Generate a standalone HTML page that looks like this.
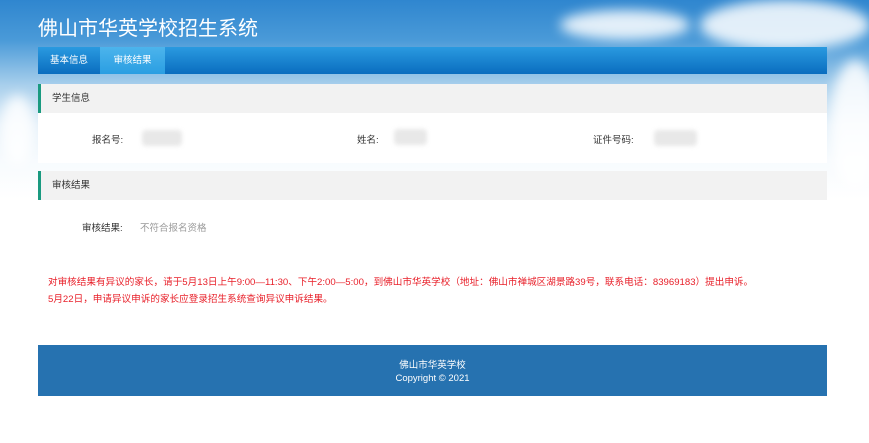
<!DOCTYPE html>
<html><head><meta charset="utf-8"><style>
*{margin:0;padding:0;box-sizing:border-box}
body{width:869px;height:443px;overflow:hidden;background:#fff;font-family:"Liberation Sans","Noto Sans CJK SC",sans-serif;position:relative}
.sky{position:absolute;left:0;top:0;width:869px;height:200px;background:linear-gradient(180deg,#2f86cf 0px,#4a9ad8 40px,#a8cfec 85px,#e2eff9 125px,#f7fbfe 160px,#fff 200px)}
.cloud{position:absolute;border-radius:50%;background:rgba(255,255,255,.85);filter:blur(6px)}
.title{position:absolute;left:38px;top:12px;color:#fff;font-size:20px}
.nav{position:absolute;left:38px;top:47px;width:789px;height:27px;background:linear-gradient(180deg,#2a9ae0,#0a6dbf)}
.nav span{position:absolute;top:0;height:27px;line-height:27px;color:#fff;font-size:9.5px;text-align:center}
.box{position:absolute;left:38px;width:789px;background:#fff}
.hd{height:29px;background:#f2f2f2;border-left:3px solid #1a9a80;font-size:9.5px;color:#333;line-height:29px;padding-left:11px}
.lbl{position:absolute;font-size:9.5px;color:#333}
.blur{position:absolute;height:16px;background:#e8e8e8;border-radius:4px;filter:blur(2px)}
.red{position:absolute;left:48px;font-size:9.6px;color:#e8202a;white-space:nowrap}
.foot{position:absolute;left:38px;top:345px;width:789px;height:51px;background:#2672b0;color:#fff;font-size:9.5px;text-align:center;padding-top:14px;line-height:13px}
</style></head><body>
<div class="sky"></div>
<div class="cloud" style="left:560px;top:10px;width:130px;height:30px"></div>
<div class="cloud" style="left:700px;top:0;width:170px;height:50px"></div>
<div class="cloud" style="left:830px;top:60px;width:50px;height:130px"></div>
<div class="cloud" style="left:0;top:95px;width:35px;height:70px"></div>
<div class="title">佛山市华英学校招生系统</div>
<div class="nav"><span style="left:0;width:62px">基本信息</span><span style="left:62px;width:65px;background:linear-gradient(180deg,#4cb4ec,#2a9ee2)">审核结果</span></div>
<div class="box" style="top:84px;height:79px">
<div class="hd">学生信息</div>
<div class="lbl" style="left:54px;top:48px">报名号:</div><div class="blur" style="left:104px;top:46px;width:40px"></div>
<div class="lbl" style="left:319px;top:48px">姓名:</div><div class="blur" style="left:356px;top:45px;width:33px"></div>
<div class="lbl" style="left:555px;top:48px">证件号码:</div><div class="blur" style="left:616px;top:46px;width:43px"></div>
</div>
<div class="box" style="top:171px;height:144px">
<div class="hd">审核结果</div>
<div class="lbl" style="left:44px;top:49px">审核结果:</div>
<div class="lbl" style="left:102px;top:49px;color:#999">不符合报名资格</div>
</div>
<div class="red" style="top:274px">对审核结果有异议的家长，请于5月13日上午9:00—11:30、下午2:00—5:00，到佛山市华英学校（地址：佛山市禅城区湖景路39号，联系电话：83969183）提出申诉。</div>
<div class="red" style="top:291px">5月22日，申请异议申诉的家长应登录招生系统查询异议申诉结果。</div>
<div class="foot">佛山市华英学校<br>Copyright © 2021</div>
</body></html>
